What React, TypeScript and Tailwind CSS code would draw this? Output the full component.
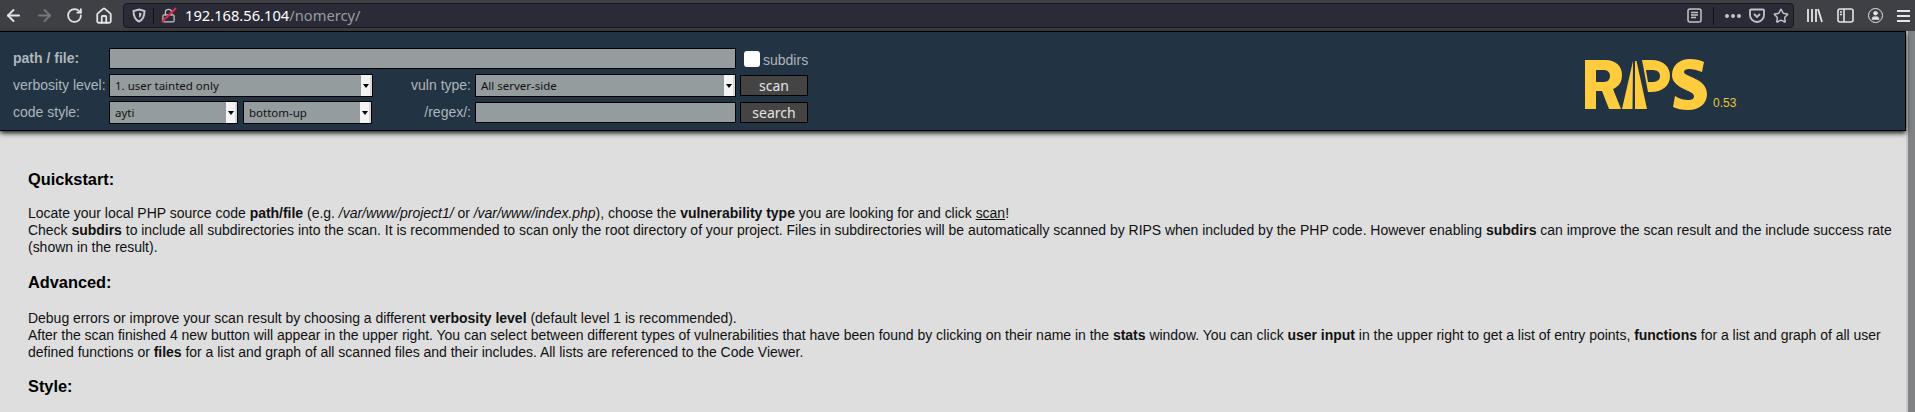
import { ReactNode } from "react";
import { ArrowLeft, ArrowRight, RotateCw, Home, Lock, Star, User } from "lucide-react";

const fieldClass = "h-[21px] border border-black bg-[#959c9e]";
const buttonClass = "ml-[4px] flex h-[21px] w-[68px] items-center justify-center border border-black bg-[#444444] text-[14px] text-[#e4e4e4] [font-family:'Noto_Sans',sans-serif]";

// native-looking arrow box on the right end of a select
const Select = ({ label, className }: { label: string; className: string }) => (
  <div className={`flex h-[23px] items-center justify-between border border-black bg-[#959c9e] pl-[5px] text-[11.5px] text-[#111] [font-family:'Noto_Sans',sans-serif] ${className}`}>
    <span>{label}</span>
    <span className="flex h-full w-[11px] items-center justify-center border-r-2 border-[#d8d8d8] bg-[#f4f4f4]">
      <svg width="6" height="4" viewBox="0 0 6 4"><path d="M0 0h6L3 4z" fill="#000" /></svg>
    </span>
  </div>
);

const H = ({ children }: { children: ReactNode }) => (
  <h3 className="text-[16.38px] leading-[19px] font-bold text-black">{children}</h3>
);

const App = () => {
  return (
    <div className="flex h-[412px] w-[1915px] flex-col overflow-hidden bg-[#dedede] [font-family:'Liberation_Sans',Arial,sans-serif]">
      {/* browser toolbar */}
      <header className="flex h-[31px] shrink-0 items-center bg-[#3f4045] pr-[5px] pl-[4px] text-[#e4e4e6]">
        <div className="flex w-[119px] items-center gap-[12px]">
          <ArrowLeft size={19} strokeWidth={2.4} />
          <ArrowRight size={19} strokeWidth={2.4} className="text-[#77777a]" />
          <RotateCw size={17} strokeWidth={2.5} />
          <Home size={18} strokeWidth={2.4} />
        </div>
        <div className="flex h-[25px] w-[670px] flex-1 items-center rounded-[4px] border border-[#18181a] bg-[#2a2b36] pr-[4px] pl-[8px]">
          <svg width="14" height="15" viewBox="0 0 14 15" fill="none" stroke="#c4c4c6" strokeWidth="2"><path d="M7 1.500l5.500 1.500c0 5-1 8.500-5.500 10.500C2.500 11.500 1.500 8 1.500 3z" /><path d="M7 4.500l2.500.7c0 2-.5 3.500-2.500 4.600z" fill="#c4c4c6" stroke="none" /></svg>
          <span className="mx-[7px] h-[16px] w-px bg-[#111]" />
          <span className="relative mr-[9px] flex">
            <Lock size={15} className="text-[#c4c4c6]" />
            <span className="absolute top-[6px] -left-[2px] h-[2px] w-[20px] -rotate-45 bg-[#e22850]" />
          </span>
          <span className="text-[14.7px] text-white [font-family:'Noto_Sans',sans-serif]">192.168.56.104<span className="text-[#9a9aa0]">/nomercy/</span></span>
          <div className="ml-auto flex items-center gap-[8px] text-[#c4c4c6]">
            <svg width="15" height="15" viewBox="0 0 15 15" fill="none" stroke="currentColor" strokeWidth="1.5"><rect x="1" y="1" width="13" height="13" rx="2" /><path d="M4 4.500h7M4 7h7M4 9.500h5" /></svg>
            <span className="mx-[3px] h-[18px] w-px bg-[#111]" />
            <span className="flex gap-[2px]">
              <span className="h-[4px] w-[4px] rounded-full bg-[#c4c4c6]" />
              <span className="h-[4px] w-[4px] rounded-full bg-[#c4c4c6]" />
              <span className="h-[4px] w-[4px] rounded-full bg-[#c4c4c6]" />
            </span>
            <svg width="16" height="15" viewBox="0 0 16 15" fill="none" stroke="currentColor" strokeWidth="1.8"><path d="M2 1.500h12a1 1 0 0 1 1 1V7a7 7 0 0 1-14 0V2.500a1 1 0 0 1 1-1z" /><path d="M5 6l3 3 3-3" /></svg>
            <Star size={16} strokeWidth={2.2} />
          </div>
        </div>
        <div className="ml-[13px] flex items-center gap-[14px]">
          <svg width="16" height="15" viewBox="0 0 16 15" stroke="#e4e4e6" strokeWidth="1.800"><path d="M1 1v13M5 1v13M9 1v13M11 1l4 13" /></svg>
          <svg width="17" height="15" viewBox="0 0 17 15" fill="none" stroke="#e4e4e6" strokeWidth="1.600"><rect x="1" y="1" width="15" height="13" rx="2" /><path d="M7 1v13M3 4h2M3 6.500h2" /></svg>
          <span className="flex h-[15px] w-[15px] items-center justify-center rounded-full border border-[#e4e4e6]"><User size={11} fill="#e4e4e6" /></span>
          <svg width="13" height="12" viewBox="0 0 13 12" fill="#e4e4e6"><path d="M0 0h13v2H0zM0 5h13v2H0zM0 10h13v2H0z" /></svg>
        </div>
      </header>

      <div className="flex min-h-0 flex-1">
        <div className="min-w-0 flex-1">
          {/* RIPS top bar */}
          <section className="relative flex h-[100px] border-y border-r border-black bg-[#223344] shadow-[0_2px_5px_#111]">
            <div className="grid h-fit grid-cols-[96px_auto] items-center gap-y-[4px] pt-[15px] pl-[13px] text-[14px] text-[#adb6bc]">
              <div className="font-bold">path / file:</div>
              <div className="flex h-[23px] items-center">
                <div className={`${fieldClass} w-[627px]`} />
                <span className="ml-[8px] h-[16px] w-[16px] rounded-[3px] bg-white" />
                <span className="ml-[3px] pt-[3px]">subdirs</span>
              </div>
              <div>verbosity level:</div>
              <div className="flex items-center">
                <Select label="1. user tainted only" className="w-[264px]" />
                <span className="w-[98px] text-right">vuln type:</span>
                <Select label="All server-side" className="ml-[4px] w-[261px]" />
                <div className={buttonClass}>scan</div>
              </div>
              <div>code style:</div>
              <div className="flex items-center">
                <Select label="ayti" className="w-[129px]" />
                <Select label="bottom-up" className="ml-[5px] w-[129px]" />
                <span className="w-[99px] text-right">/regex/:</span>
                <div className={`${fieldClass} ml-[4px] w-[261px]`} />
                <div className={buttonClass}>search</div>
              </div>
            </div>
            {/* logo */}
            <div className="absolute top-[27px] left-[1585px] flex items-end">
              <svg width="123" height="52" viewBox="0 0 123 52" fill="#ffcc3d">
                <path fillRule="evenodd" d="M0 1h20c12 0 17 7 17 15 0 8-4 12-9 14l8 20H24l-7-18h-6v18H0zM11 11v12h8c4 0 6-3 6-6 0-4-3-6-6-6z" />
                <path d="M48 2L37 50h10.500z" />
                <path d="M50 2h1.500L62 50H50z" />
                <path fillRule="evenodd" d="M57 1h9c13 0 19 7 19 16 0 10-8 16-19 16h-3zM61 11l2 12h3c6 0 9-2 9-6 0-4-3-6-8-6z" />
                <path d="M119 3l-2 10c-5-2-9-3-13-3-3 0-5 1-5 3 0 5 23 6 23 22 0 10-8 16-19 16-6 0-11-1-15-3l2-11c5 3 9 4 13 4s6-1 6-4c0-6-22-7-22-21C87 6 95 0 105 0c6 0 10 1 14 3z" />
              </svg>
              <span className="mb-[-1px] ml-[5px] text-[12px] text-[#e8c53a]">0.53</span>
            </div>
          </section>

          {/* help text */}
          <main className="pt-[39px] pr-[10px] pl-[28px] text-[14px] leading-[17px] tracking-[-0.02px] text-[#111]">
            <H>Quickstart:</H>
            <p className="mt-[16px]">
              Locate your local PHP source code <b>path/file</b> (e.g. <i>/var/www/project1/</i> or <i>/var/www/index.php</i>), choose the <b>vulnerability type</b> you are looking for and click <u>scan</u>!<br />
              Check <b>subdirs</b> to include all subdirectories into the scan. It is recommended to scan only the root directory of your project. Files in subdirectories will be automatically scanned by RIPS when included by the PHP code. However enabling <b>subdirs</b> can improve the scan result and the include success rate (shown in the result).
            </p>
            <div className="mt-[17px]"><H>Advanced:</H></div>
            <p className="mt-[18px]">
              Debug errors or improve your scan result by choosing a different <b>verbosity level</b> (default level 1 is recommended).<br />
              After the scan finished 4 new button will appear in the upper right. You can select between different types of vulnerabilities that have been found by clicking on their name in the <b>stats</b> window. You can click <b>user input</b> in the upper right to get a list of entry points, <b>functions</b> for a list and graph of all user defined functions or <b>files</b> for a list and graph of all scanned files and their includes. All lists are referenced to the Code Viewer.
            </p>
            <div className="mt-[16px]"><H>Style:</H></div>
          </main>
        </div>
        {/* scrollbar */}
        <div className="w-[9px] shrink-0 border-l-2 border-[#c8c8c8] bg-[#7f8384]" />
      </div>
    </div>
  );
};

export default App;
